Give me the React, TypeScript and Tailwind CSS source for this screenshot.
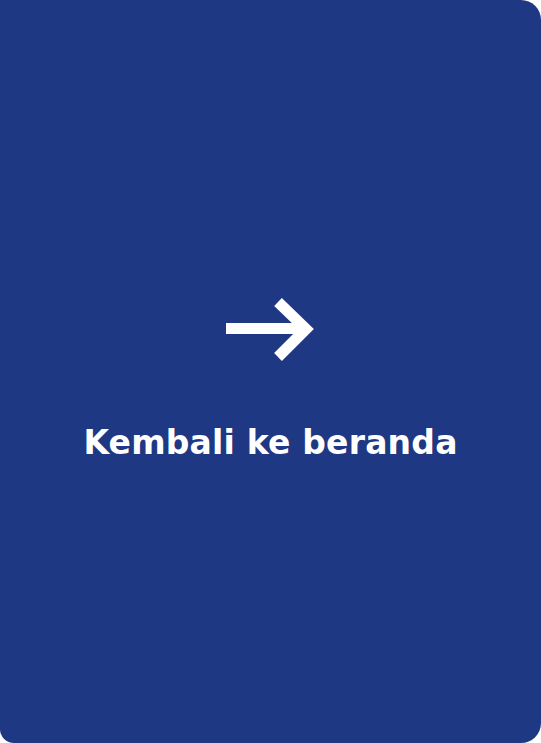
// Back-to-home card
export default function App() {
  return (
    <div className="w-[541px] h-[743px] bg-white overflow-hidden">
      <div className="w-full h-full bg-[#1f3884] rounded-tr-[20px] rounded-br-[20px] rounded-bl-[14px] flex flex-col items-center pt-[297px]">
        {/* Arrow */}
        <svg width="90" height="66" viewBox="0 0 90 66" fill="none" className="block">
          <line x1="0" y1="31.5" x2="80" y2="31.5" stroke="white" strokeWidth="11" />
          <polyline points="52,5 80,32 52,60" stroke="white" strokeWidth="11" fill="none" strokeLinejoin="miter" />
        </svg>
        <p
          className="mt-[60px] text-white font-bold text-[33px] leading-[40px] tracking-[0.2px]"
          style={{ fontFamily: "'DejaVu Sans', sans-serif" }}
        >
          Kembali ke beranda
        </p>
      </div>
    </div>
  );
}
